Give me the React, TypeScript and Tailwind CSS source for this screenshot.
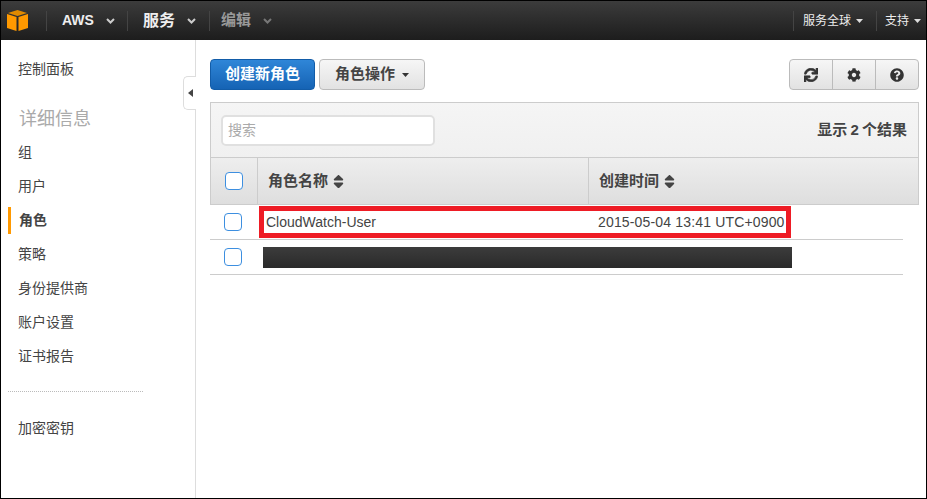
import { FaCog, FaQuestionCircle, FaSort, FaSync } from 'react-icons/fa'

const FONT = '[font-family:"Liberation_Sans","Noto_Sans_CJK_SC",sans-serif]'

const navItems = ['组', '用户', '角色', '策略', '身份提供商', '账户设置', '证书报告']

function Chevron({ className }: { className: string }) {
  return (
    <svg width="9" height="6" viewBox="0 0 9 6" className={className}>
      <path d="M1 1 L4.5 4.5 L8 1" fill="none" stroke="currentColor" strokeWidth="2" />
    </svg>
  )
}

function Caret({ className }: { className: string }) {
  return (
    <svg width="7" height="4" viewBox="0 0 7 4" className={className}>
      <path d="M0 0 H7 L3.5 4 Z" fill="currentColor" />
    </svg>
  )
}

function Logo() {
  return (
    <svg width="21" height="21" viewBox="0 0 21 21" className="ml-[6px]">
      <path d="M10.5 0 L20 3 L10.5 6 L1 3 Z" fill="#e08a00" />
      <path d="M0 4 L9.5 7 V21 L0 18 Z" fill="#ff9900" />
      <path d="M21 4 L11.5 7 V21 L21 18 Z" fill="#ff9900" />
    </svg>
  )
}

function Divider() {
  return <div className="h-[20px] w-px bg-[#444]" />
}

function Checkbox() {
  return <div className="h-[18px] w-[18px] rounded-[4px] border border-[#3d8fe0] bg-white" />
}

export default function App() {
  return (
    <div className={`flex h-[499px] w-[927px] flex-col overflow-hidden border border-black bg-white ${FONT}`}>
      <header className="flex h-[39px] shrink-0 items-center bg-gradient-to-b from-[#3c3c3c] to-[#1d1d1d] text-white">
        <Logo />
        <div className="ml-[18px]"><Divider /></div>
        <div className="flex w-[80px] items-center pl-[15px] text-[14px] font-bold text-[#eee]">
          AWS
          <Chevron className="ml-[12px] text-[#ccc]" />
        </div>
        <Divider />
        <div className="flex w-[81px] items-center pl-[15px] text-[16px] font-bold text-[#eee]">
          服务
          <Chevron className="ml-[12px] text-[#ccc]" />
        </div>
        <Divider />
        <div className="flex items-center pl-[11px] text-[15px] font-bold text-[#999]">
          编辑
          <Chevron className="ml-[12px] text-[#777]" />
        </div>
        <div className="ml-auto"><Divider /></div>
        <div className="flex w-[82px] items-center pl-[9px] text-[12px] text-[#eee]">
          服务全球
          <Caret className="ml-[5px] text-[#ddd]" />
        </div>
        <Divider />
        <div className="flex w-[49px] items-center pl-[8px] text-[12px] text-[#eee]">
          支持
          <Caret className="ml-[5px] text-[#ddd]" />
        </div>
      </header>

      <div className="relative flex min-h-0 flex-1">
        <aside className="w-[195px] shrink-0 border-r border-[#ddd] pl-[7px] text-[14px] text-[#444]">
          <div className="pl-[10px] pt-[19px] leading-[20px]">控制面板</div>
          <div className="pl-[11px] pt-[28px] text-[18px] leading-[24px] text-[#aaa]">详细信息</div>
          <ul className="mt-[8px]">
            {navItems.map((item) => (
              <li
                key={item}
                className={
                  item === '角色'
                    ? 'mb-[7px] flex h-[27px] items-center border-l-[3px] border-[#ff9900] pl-[8px] font-bold'
                    : 'mb-[7px] flex h-[27px] items-center pl-[10px]'
                }
              >
                {item}
              </li>
            ))}
          </ul>
          <div className="mt-[21px] w-[135px] border-t border-dotted border-[#bbb]" />
          <div className="pl-[10px] pt-[26px] leading-[20px]">加密密钥</div>
        </aside>

        <div className="absolute left-[182px] top-[36px] flex h-[34px] w-[13px] items-center justify-center rounded-l-[5px] border border-r-0 border-[#ddd] bg-white">
          <svg width="5" height="8" viewBox="0 0 5 8">
            <path d="M5 0 V8 L0 4 Z" fill="#444" />
          </svg>
        </div>

        <main className="min-w-0 flex-1 pl-[14px] pr-[7px] pt-[19px]">
          <div className="flex h-[31px] items-stretch">
            <button className="w-[105px] rounded-[4px] border border-[#125ca8] bg-gradient-to-b from-[#2f86d8] to-[#1563b4] text-[15px] font-bold text-white">
              创建新角色
            </button>
            <button className="ml-[4px] flex w-[106px] items-center justify-center rounded-[4px] border border-[#bbb] bg-gradient-to-b from-[#f6f6f6] to-[#e2e2e2] text-[15px] font-bold text-[#444]">
              角色操作
              <Caret className="ml-[7px] text-[#333]" />
            </button>
            <div className="ml-auto flex w-[130px] rounded-[4px] border border-[#bbb] bg-gradient-to-b from-[#f6f6f6] to-[#e2e2e2] text-[#333]">
              <div className="flex flex-1 items-center justify-center border-r border-[#bbb]"><FaSync size={14} stroke="currentColor" strokeWidth={24} /></div>
              <div className="flex flex-1 items-center justify-center border-r border-[#bbb]"><FaCog size={14} /></div>
              <div className="flex flex-1 items-center justify-center"><FaQuestionCircle size={14} /></div>
            </div>
          </div>

          <section className="relative mt-[12px]">
            <div className="border border-[#ccc]">
              <div className="flex h-[54px] items-center justify-between bg-gradient-to-b from-[#f5f5f5] to-[#f0f0f0] pl-[10px] pr-[11px]">
                <div className="flex h-[31px] w-[214px] items-center rounded-[5px] border-2 border-[#e0e0e0] bg-white pl-[5px] text-[14px] text-[#aaa]">
                  搜索
                </div>
                <div className="text-[15px] font-bold text-[#444] [word-spacing:-1px]">
                  显示 2 个结果
                </div>
              </div>
              <div className="flex h-[47px] border-t border-[#ccc] bg-gradient-to-b from-[#eeeeee] to-[#dedede] text-[15px] font-bold text-[#444]">
                <div className="flex w-[47px] items-center justify-center border-r border-[#ccc] pr-px"><Checkbox /></div>
                <div className="flex w-[331px] items-center border-r border-[#ccc] pl-[10px]">
                  角色名称
                  <FaSort size={17} className="ml-[2px]" />
                </div>
                <div className="flex items-center pl-[10px]">
                  创建时间
                  <FaSort size={17} className="ml-[2px]" />
                </div>
              </div>
            </div>
            <div className="mr-[16px] flex h-[35px] items-center border-b border-[#ccc] text-[14px] text-[#444]">
              <div className="flex w-[46px] justify-center"><Checkbox /></div>
              <div className="w-[332px] pl-[10px]">CloudWatch-User</div>
              <div className="pl-[10px] tracking-[0.16px]">2015-05-04 13:41 UTC+0900</div>
            </div>
            <div className="mr-[16px] flex h-[35px] items-center border-b border-[#ccc]">
              <div className="flex w-[46px] justify-center"><Checkbox /></div>
              <div className="ml-[7px] h-[21px] w-[529px] bg-gradient-to-b from-[#3c3c3c] to-[#2a2a2a]" />
            </div>
            <div className="absolute left-[49px] top-[104px] h-[32px] w-[532px] border-[5px] border-[#ee1c25]" />
          </section>
        </main>
      </div>
    </div>
  )
}
